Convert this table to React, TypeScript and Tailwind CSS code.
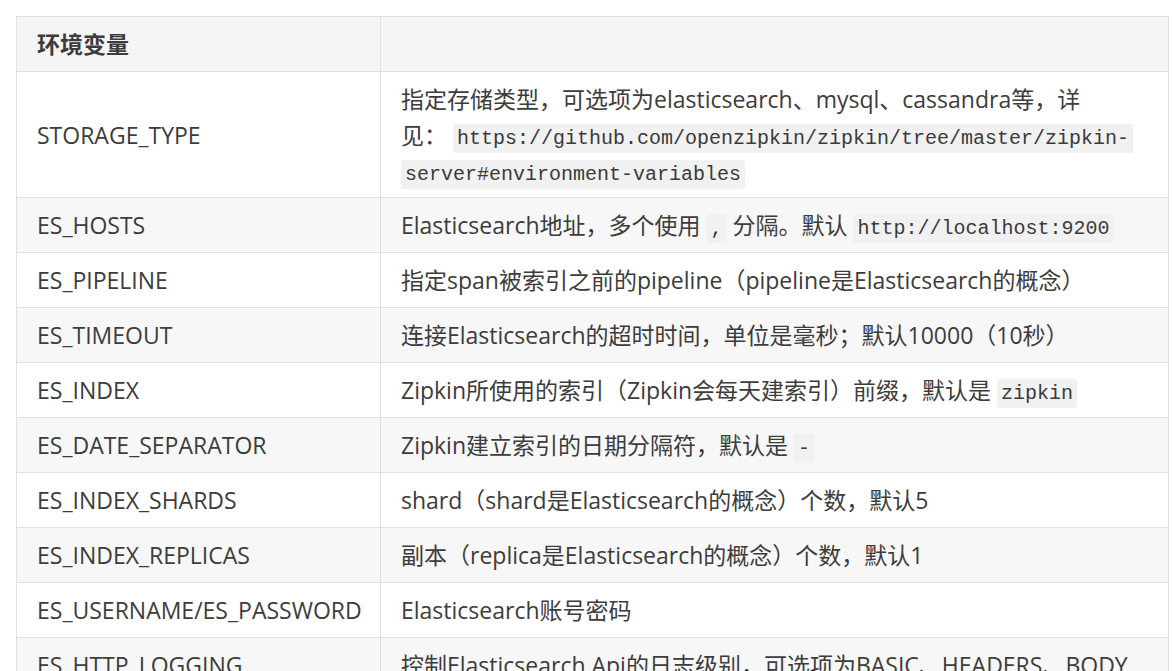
import type { ReactNode } from 'react';

function Code({ children }: { children: ReactNode }) {
  return (
    <code className="rounded-[3px] bg-[#f1f1f1] px-1 py-[3px] font-['Liberation_Mono',monospace] text-[20px] leading-none text-[#3a3a3a]">
      {children}
    </code>
  );
}

const rows: { name: string; desc: ReactNode; tall?: boolean }[] = [
  {
    name: 'STORAGE_TYPE',
    tall: true,
    desc: (
      <>
        指定存储类型，可选项为elasticsearch、mysql、cassandra等，详
        <br />
        见： <Code>https://github.com/openzipkin/zipkin/tree/master/zipkin-</Code>
        <br />
        <Code>server#environment-variables</Code>
      </>
    ),
  },
  {
    name: 'ES_HOSTS',
    desc: (
      <>
        Elasticsearch地址，多个使用 <Code>,</Code> 分隔。默认 <Code>http://localhost:9200</Code>
      </>
    ),
  },
  { name: 'ES_PIPELINE', desc: '指定span被索引之前的pipeline（pipeline是Elasticsearch的概念）' },
  { name: 'ES_TIMEOUT', desc: '连接Elasticsearch的超时时间，单位是毫秒；默认10000（10秒）' },
  {
    name: 'ES_INDEX',
    desc: (
      <>
        Zipkin所使用的索引（Zipkin会每天建索引）前缀，默认是 <Code>zipkin</Code>
      </>
    ),
  },
  {
    name: 'ES_DATE_SEPARATOR',
    desc: (
      <>
        Zipkin建立索引的日期分隔符，默认是 <Code>-</Code>
      </>
    ),
  },
  { name: 'ES_INDEX_SHARDS', desc: 'shard（shard是Elasticsearch的概念）个数，默认5' },
  { name: 'ES_INDEX_REPLICAS', desc: '副本（replica是Elasticsearch的概念）个数，默认1' },
  { name: 'ES_USERNAME/ES_PASSWORD', desc: 'Elasticsearch账号密码' },
  { name: 'ES_HTTP_LOGGING', desc: '控制Elasticsearch Api的日志级别，可选项为BASIC、HEADERS、BODY' },
];

export default function App() {
  return (
    <div className="min-h-screen bg-white pl-4 pt-4 font-['Open_Sans','Noto_Sans_CJK_SC',sans-serif] text-[23px] text-[#3c3c3c]">
      <table className="w-[1153px] table-fixed border-collapse">
        <colgroup>
          <col className="w-[364px]" />
          <col />
        </colgroup>
        <thead>
          <tr className="h-[55px] bg-[#f5f5f5]">
            <th className="border border-[#e0e0e0] px-5 py-0 text-left font-bold leading-[36px]">环境变量</th>
            <th className="border border-[#e0e0e0] px-5 py-0" />
          </tr>
        </thead>
        <tbody>
          {rows.map((r, i) => (
            <tr key={r.name} className={(r.tall ? 'h-[126px] ' : 'h-[55px] ') + (i % 2 === 1 ? 'bg-[#f7f7f7]' : 'bg-white')}>
              <td className="border border-[#e0e0e0] px-5 py-0 leading-[36px]">{r.name}</td>
              <td className="border border-[#e0e0e0] px-5 py-0 leading-[36px]">{r.desc}</td>
            </tr>
          ))}
        </tbody>
      </table>
    </div>
  );
}
